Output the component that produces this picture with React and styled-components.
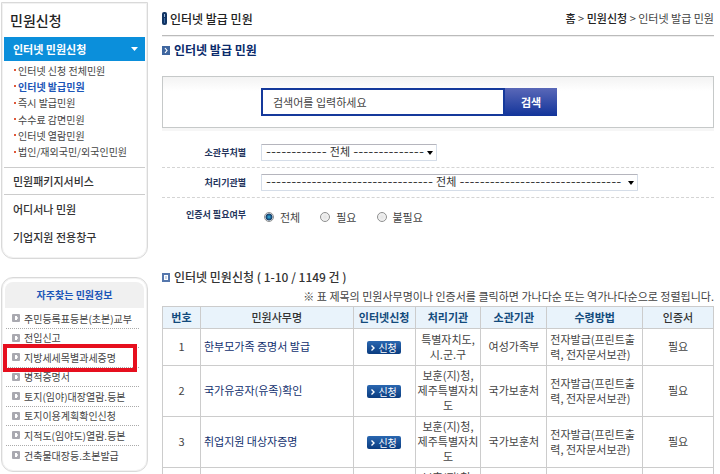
import React from "react";

import styled, { createGlobalStyle } from "styled-components";

const subMenu = [
    "인터넷 신청 전체민원",
    "인터넷 발급민원",
    "즉시 발급민원",
    "수수료 감면민원",
    "인터넷 열람민원",
    "법인/재외국민/외국인민원",
];

const quickLinks = [
    "주민등록표등본(초본)교부",
    "전입신고",
    "지방세세목별과세증명",
    "병적증명서",
    "토지(임야)대장열람.등본",
    "토지이용계획확인신청",
    "지적도(임야도)열람.등본",
    "건축물대장등.초본발급",
];

const columns = [
    { name: "번호", width: 38, sortable: true },
    { name: "민원사무명", width: 153 },
    { name: "인터넷신청", width: 62, sortable: true },
    { name: "처리기관", width: 66, sortable: true },
    { name: "소관기관", width: 66, sortable: true },
    { name: "수령방법", width: 96, sortable: true },
    { name: "인증서", width: 71 },
];

const delivery = "전자발급(프린트출\n력, 전자문서보관)";

const rows = [
    {
        id: 1,
        name: "한부모가족 증명서 발급",
        office: "특별자치도,\n시.군.구",
        ministry: "여성가족부",
        delivery,
        cert: "필요",
    },
    {
        id: 2,
        name: "국가유공자(유족)확인",
        office: "보훈(지)청,\n제주특별자치\n도",
        ministry: "국가보훈처",
        delivery,
        cert: "필요",
    },
    {
        id: 3,
        name: "취업지원 대상자증명",
        office: "보훈(지)청,\n제주특별자치\n도",
        ministry: "국가보훈처",
        delivery,
        cert: "필요",
    },
    { office: "보훈(지)청,\n제주특별자치\n도" },
];

const SmallBullet = () => (
    <svg width="8" height="8" viewBox="0 0 8 8" aria-hidden="true">
        <rect width="8" height="8" rx="1" fill="#a9a9b0" />
        <path d="M3 2h2v4H3z" fill="#fff" />
        <path d="M5 3h1v2H5z" fill="#e4e4e8" />
    </svg>
);

const App = () => (
    <Page>
        <GlobalStyle />
        <Sidebar>
            <MenuBox>
                <MenuTitle>민원신청</MenuTitle>
                <MenuActive href="#internet">
                    인터넷 민원신청
                    <svg width="7" height="4" viewBox="0 0 7 4" aria-hidden="true">
                        <path d="M0 0h7L3.5 4z" fill="#fff" />
                    </svg>
                </MenuActive>
                <SubMenu>
                    {subMenu.map((item, i) => (
                        <SubItem key={item}>
                            <SubLink href="#sub" $active={i === 1}>
                                {item}
                            </SubLink>
                        </SubItem>
                    ))}
                </SubMenu>
                <MenuLink href="#package" $lined>
                    민원패키지서비스
                </MenuLink>
                <MenuLink href="#anywhere">어디서나 민원</MenuLink>
                <MenuLink href="#business">기업지원 전용창구</MenuLink>
            </MenuBox>
            <QuickBox>
                <QuickTitle>자주찾는 민원정보</QuickTitle>
                <QuickList>
                    {quickLinks.map((item, i) => (
                        <QuickItem key={item} $marked={i === 2}>
                            <SmallBullet />
                            <a href="#quick">{item}</a>
                        </QuickItem>
                    ))}
                </QuickList>
            </QuickBox>
        </Sidebar>
        <Content>
            <TopLine>
                <PageTitle>
                    <svg width="5" height="13" viewBox="0 0 5 13" aria-hidden="true">
                        <rect width="5" height="13" rx="2" fill="#123564" />
                        <path d="M2 2h1v3H2z" fill="#9db9dc" />
                        <path d="M2 6h1v5H2z" fill="#3d6ba6" />
                    </svg>
                    인터넷 발급 민원
                </PageTitle>
                <Crumbs>
                    <a href="#home">홈</a> &gt; <a href="#apply">민원신청</a> &gt; <span>인터넷 발급 민원</span>
                </Crumbs>
            </TopLine>
            <SectionTitle $blue>
                <svg width="8" height="9" viewBox="0 0 8 9" aria-hidden="true">
                    <rect width="8" height="9" fill="#3f669f" />
                    <path d="M3 2l2 2.5L3 7" fill="none" stroke="#fff" strokeWidth="1.2" />
                </svg>
                인터넷 발급 민원
            </SectionTitle>
            <form onSubmit={(e) => e.preventDefault()}>
                <SearchBox>
                    <SearchInput aria-label="검색어" defaultValue="검색어를 입력하세요" />
                    <SearchButton type="submit">검색</SearchButton>
                </SearchBox>
                <Filters>
                    <FilterRow>
                        <FilterLabel htmlFor="ministry">소관부처별</FilterLabel>
                        <SelectWrap $width={176}>
                            <Select id="ministry">
                                <option>{`${"-".repeat(12)} 전체 ${"-".repeat(14)}`}</option>
                            </Select>
                        </SelectWrap>
                    </FilterRow>
                    <FilterRow>
                        <FilterLabel htmlFor="office">처리기관별</FilterLabel>
                        <SelectWrap $width={377}>
                            <Select id="office">
                                <option>{`${"-".repeat(33)} 전체 ${"-".repeat(32)}`}</option>
                            </Select>
                        </SelectWrap>
                    </FilterRow>
                    <FilterRow role="radiogroup" aria-labelledby="cert">
                        <FilterLabel as="span" id="cert">
                            인증서 필요여부
                        </FilterLabel>
                        <Radios>
                            {["전체", "필요", "불필요"].map((label, i) => (
                                <RadioLabel key={label}>
                                    <Radio type="radio" name="cert" defaultChecked={i === 0} />
                                    {label}
                                </RadioLabel>
                            ))}
                        </Radios>
                    </FilterRow>
                </Filters>
            </form>
            <SectionTitle>
                <svg width="8" height="9" viewBox="0 0 8 9" aria-hidden="true">
                    <rect width="8" height="9" fill="#5577ad" />
                    <rect x="2" y="2" width="4" height="5" fill="#fff" />
                    <rect x="3" y="3" width="2" height="3" fill="#c9d6ea" />
                </svg>
                인터넷 민원신청 ( 1-10 / 1149 건 )
            </SectionTitle>
            <Note>※ 표 제목의 민원사무명이나 인증서를 클릭하면 가나다순 또는 역가나다순으로 정렬됩니다.</Note>
            <Table>
                <colgroup>
                    {columns.map((col) => (
                        <Col key={col.name} $share={col.width} />
                    ))}
                </colgroup>
                <thead>
                    <tr>
                        {columns.map((col) => (
                            <Th key={col.name} $blue={col.sortable}>
                                {col.name}
                            </Th>
                        ))}
                    </tr>
                </thead>
                <tbody>
                    {rows.map((row, i) => (
                        <tr key={i}>
                            <Td>{row.id}</Td>
                            <Td $left>{row.name && <NameLink href="#detail">{row.name}</NameLink>}</Td>
                            <Td>
                                {row.name && (
                                    <ApplyButton type="button">
                                        <svg width="4" height="6" viewBox="0 0 4 6" aria-hidden="true">
                                            <path d="M0.5 0.5L3 3L0.5 5.5" fill="none" stroke="#fff" strokeWidth="1.4" />
                                        </svg>
                                        신청
                                    </ApplyButton>
                                )}
                            </Td>
                            <Td>{row.office}</Td>
                            <Td>{row.ministry}</Td>
                            <Td $left>{row.delivery}</Td>
                            <Td>{row.cert}</Td>
                        </tr>
                    ))}
                </tbody>
            </Table>
        </Content>
    </Page>
);

const GlobalStyle = createGlobalStyle`
    * {
        box-sizing: border-box;
    }
    body {
        background: #fff;
        color: #444;
        font-family: "Noto Sans CJK KR", sans-serif;
        font-size: 11px;
        line-height: 15px;
        margin: 0;
    }
    a {
        color: inherit;
        text-decoration: none;
    }
    svg {
        flex: none;
    }
    button, input, select {
        font: inherit;
    }
`;
const Page = styled.div`
    display: grid;
    gap: 14px;
    grid-template-columns: 147px 1fr;
    height: 100vh;
    overflow: hidden;
    padding: 2px 6px 0 1px;
`;
const Sidebar = styled.aside`
    display: flex;
    flex-direction: column;
    gap: 18px;
`;
const MenuBox = styled.nav`
    border: 1px solid #d9d9d9;
    border-radius: 0 0 12px 12px;
    box-shadow: inset 0 0 0 1px #f2f2f2;
    display: flex;
    flex-direction: column;
    padding: 0 2px 7px;
`;
const MenuTitle = styled.h2`
    color: #222;
    font-size: 14px;
    font-weight: 500;
    line-height: 34px;
    margin: 0;
    padding-left: 6px;
`;
const MenuActive = styled.a`
    align-items: center;
    background: #0b8fdb;
    color: #fff;
    display: flex;
    font-weight: 700;
    justify-content: space-between;
    line-height: 24px;
    padding: 0 7px 0 9px;
`;
const SubMenu = styled.ul`
    border-bottom: 1px solid #ccc;
    display: grid;
    grid-auto-rows: 1fr;
    list-style: none;
    margin: 0;
    min-height: 107px;
    padding: 1px 0 7px 10px;
`;
const SubItem = styled.li`
    align-items: center;
    display: flex;
    font-size: 10px;
    gap: 2px;
    &::before {
        background: #e0583a;
        content: "";
        height: 2px;
        width: 2px;
    }
`;
const SubLink = styled.a`
    color: ${(props) => (props.$active ? "#1c56b8" : "#444")};
    font-weight: ${(props) => (props.$active ? 700 : 400)};
`;
const MenuLink = styled.a`
    border-bottom: ${(props) => (props.$lined ? "1px solid #ccc" : "none")};
    color: #333;
    font-weight: 500;
    line-height: ${(props) => (props.$lined ? "26px" : "28px")};
    padding-left: 9px;
`;
const QuickBox = styled.section`
    border: 1px solid #d9d9d9;
    border-radius: 12px;
    box-shadow: inset 0 0 0 1px #f2f2f2;
    padding: 4px 3px 6px;
`;
const QuickTitle = styled.h3`
    background: #f0f0f0;
    border-radius: 8px 8px 0 0;
    color: #1c56b8;
    font-size: 10px;
    font-weight: 700;
    line-height: 26px;
    margin: 0;
    text-align: center;
`;
const QuickList = styled.ul`
    color: #444;
    display: grid;
    font-size: 10px;
    grid-auto-rows: 1fr;
    list-style: none;
    margin: 0;
    min-height: 157px;
    padding: 1px 5px 0 1px;
`;
const QuickItem = styled.li`
    align-items: center;
    border-bottom: 1px dotted #aaa;
    display: flex;
    gap: 4px;
    padding-left: 6px;
    position: relative;
    white-space: nowrap;
    &:last-child {
        border-bottom: none;
    }
    &::after {
        border: 4px solid #e60f1e;
        content: ${(props) => (props.$marked ? '""' : "none")};
        inset: -4px 2px -5px -3px;
        position: absolute;
        z-index: 1;
    }
`;
const Content = styled.main`
    min-width: 0;
`;
const TopLine = styled.header`
    align-items: center;
    border-bottom: 1px solid #bbb;
    box-shadow: 0 1px 0 #eee;
    display: flex;
    height: 34px;
    justify-content: space-between;
`;
const PageTitle = styled.h1`
    align-items: center;
    color: #222;
    display: flex;
    font-size: 12px;
    font-weight: 500;
    gap: 3px;
    margin: 0;
`;
const Crumbs = styled.nav`
    a {
        color: #222;
        font-weight: 500;
    }
`;
const SectionTitle = styled.h2`
    align-items: center;
    color: ${(props) => (props.$blue ? "#0a2a6b" : "#333")};
    display: flex;
    font-size: 12px;
    font-weight: ${(props) => (props.$blue ? 700 : 500)};
    gap: 4px;
    line-height: 16px;
    margin: 0;
    padding-top: ${(props) => (props.$blue ? "6px" : "0")};
`;
const SearchBox = styled.div`
    background: linear-gradient(#f3f3f3, #fff 14px);
    border: 1px solid #c6c9c9;
    box-shadow: 0 3px 0 #f6f6f6;
    display: flex;
    height: 52px;
    margin-top: 18px;
    padding: 11px 10px 11px 98px;
`;
const SearchInput = styled.input`
    background: #fff;
    border: 2px solid #15399b;
    color: #444;
    flex: 0 1 244px;
    height: 28px;
    min-width: 0;
    outline: 0;
    padding: 0 10px;
`;
const SearchButton = styled.button`
    background: linear-gradient(#5a68b8, #12349a);
    border: none;
    color: #fff;
    cursor: pointer;
    font-weight: 700;
    height: 28px;
    padding: 0;
    width: 52px;
`;
const Filters = styled.div`
    margin-bottom: 39px;
    padding-top: 10px;
`;
const FilterRow = styled.div`
    align-items: center;
    border-bottom: 1px dashed #d4d4d4;
    display: flex;
    gap: 15px;
    height: 30px;
    &:last-child {
        border-bottom: none;
        height: 32px;
    }
`;
const FilterLabel = styled.label`
    color: #24345c;
    font-size: 9px;
    font-weight: 700;
    text-align: right;
    width: 84px;
`;
const SelectWrap = styled.div`
    display: flex;
    flex: 0 1 ${(props) => props.$width}px;
    position: relative;
    &::after {
        border: 3px solid transparent;
        border-bottom: none;
        border-top: 4px solid #000;
        content: "";
        pointer-events: none;
        position: absolute;
        right: 4px;
        top: 7px;
    }
`;
const Select = styled.select`
    appearance: none;
    background: #fff;
    border: 1px solid #d5dde8;
    border-top-color: #b5b5bd;
    border-radius: 1px;
    color: #333;
    font-family: Inter, "Noto Sans CJK KR", sans-serif;
    height: 17px;
    line-height: 15px;
    padding: 0 4px;
    width: 100%;
`;
const Radios = styled.div`
    display: flex;
    gap: 20px;
    padding-left: 3px;
    padding-top: 6px;
`;
const RadioLabel = styled.label`
    align-items: center;
    display: flex;
    gap: 6px;
    min-width: 34px;
`;
const Radio = styled.input`
    appearance: none;
    background: radial-gradient(circle, #e4e4e4, #f8f8f8);
    border: 1px solid #8e8f8f;
    border-radius: 50%;
    height: 10px;
    margin: 0;
    width: 10px;
    &:checked {
        background: radial-gradient(circle, #35b5e8 0, #123a66 3px, #fff 4px);
    }
`;
const Note = styled.p`
    line-height: 20px;
    margin: 1px 0 0;
    text-align: right;
    white-space: nowrap;
`;
const Table = styled.table`
    border-collapse: collapse;
    table-layout: fixed;
    width: 100%;
`;
const Col = styled.col`
    width: ${(props) => (props.$share / 552) * 100}%;
`;
const Th = styled.th`
    background: #e9f3fb;
    border: 1px solid #ccc;
    color: ${(props) => (props.$blue ? "#124a7c" : "#333")};
    font-weight: ${(props) => (props.$blue ? 700 : 500)};
    height: 22px;
    padding: 0;
    white-space: nowrap;
`;
const Td = styled.td`
    border: 1px solid #ccc;
    height: 37px;
    padding: 2px ${(props) => (props.$left ? "3px" : "0")} 3px;
    text-align: ${(props) => (props.$left ? "left" : "center")};
    white-space: pre;
`;
const NameLink = styled.a`
    color: #12306e;
`;
const ApplyButton = styled.button`
    align-items: center;
    background: linear-gradient(#2a67b0, #0a3c80);
    border: none;
    border-radius: 2px;
    color: #fff;
    cursor: pointer;
    display: inline-flex;
    font-size: 10px;
    gap: 3px;
    height: 13px;
    justify-content: center;
    line-height: 13px;
    padding: 0;
    vertical-align: middle;
    width: 34px;
`;

export default App;
